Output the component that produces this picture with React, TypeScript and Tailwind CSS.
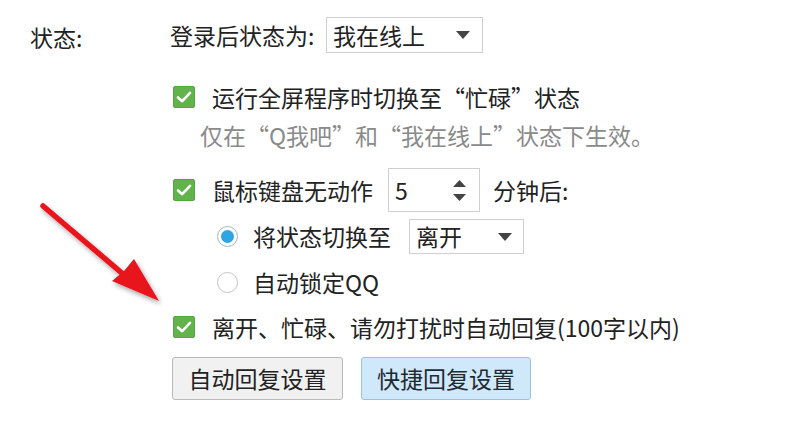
import React from "react";

// green ticked box
const Check = () => (
  <span className="inline-flex w-[22px] h-[22px] shrink-0 items-center justify-center rounded-[2px] bg-[#62b34c] border border-[#55a541]">
    <svg width="16" height="14" viewBox="0 0 16 14">
      <path d="M2 7.5 L6.2 11.2 L14 2.8" fill="none" stroke="#fff" strokeWidth="2.6" strokeLinecap="round" strokeLinejoin="round" />
    </svg>
  </span>
);

const Radio = ({ on }: { on?: boolean }) => (
  <span
    className={
      on
        ? "inline-flex w-[21px] h-[21px] shrink-0 items-center justify-center rounded-full border border-[#9fb6c8] bg-white"
        : "inline-flex w-[21px] h-[21px] shrink-0 rounded-full border border-[#c4c4c4] bg-white"
    }
  >
    {on && <span className="w-[13px] h-[13px] rounded-full bg-[#2ea6e3]" />}
  </span>
);

const Caret = () => (
  <svg width="14" height="8" viewBox="0 0 14 8">
    <path d="M0 0 H14 L7 8 Z" fill="#444" />
  </svg>
);

const App = () => {
  return (
    <div
      className="relative w-[800px] h-[423px] bg-white text-[23px] text-[#222] overflow-hidden"
      style={{ fontFamily: '"Noto Sans CJK SC", "Noto Sans", sans-serif' }}
    >
      <div className="flex">
        <div className="w-[170px] pl-[30px] pt-[19px]">
          <div className="h-[36px] flex items-center">状态:</div>
        </div>

        <div className="flex flex-col">
          {/* row 1 */}
          <div className="mt-[17px] h-[36px] flex items-center">
            <span className="w-[156px] whitespace-nowrap">登录后状态为:</span>
            <div className="w-[157px] h-[36px] border border-[#cfcfcf] flex items-center pl-[6px] pr-[12px] justify-between">
              <span>我在线上</span>
              <Caret />
            </div>
          </div>

          {/* row 2 */}
          <div className="mt-[33px] h-[22px] flex items-center ml-[3px]">
            <Check />
            <span className="ml-[17px] whitespace-nowrap">运行全屏程序时切换至“忙碌”状态</span>
          </div>

          {/* row 3 */}
          <div className="mt-[12px] h-[30px] flex items-center ml-[30px] text-[#8a8a8a] whitespace-nowrap">
            仅在“Q我吧”和“我在线上”状态下生效。
          </div>

          {/* row 4 */}
          <div className="mt-[18px] h-[44px] flex items-center ml-[3px]">
            <Check />
            <span className="ml-[17px] whitespace-nowrap">鼠标键盘无动作</span>
            <div className="ml-[15px] w-[92px] h-[44px] border border-[#cfcfcf] flex items-center justify-between pl-[6px] pr-[13px]">
              <span>5</span>
              <div className="flex flex-col gap-[7px]">
                <svg width="13" height="7" viewBox="0 0 13 7">
                  <path d="M0 7 H13 L6.5 0 Z" fill="#444" />
                </svg>
                <svg width="13" height="7" viewBox="0 0 13 7">
                  <path d="M0 0 H13 L6.5 7 Z" fill="#444" />
                </svg>
              </div>
            </div>
            <span className="ml-[13px] whitespace-nowrap">分钟后:</span>
          </div>

          {/* row 5 */}
          <div className="mt-[7px] h-[35px] flex items-center ml-[47px]">
            <Radio on />
            <span className="ml-[15px] whitespace-nowrap">将状态切换至</span>
            <div className="ml-[18px] w-[115px] h-[35px] border border-[#cfcfcf] flex items-center justify-between pl-[6px] pr-[11px]">
              <span>离开</span>
              <Caret />
            </div>
          </div>

          {/* row 6 */}
          <div className="mt-[13px] h-[30px] flex items-center ml-[47px]">
            <Radio />
            <span className="ml-[15px]">自动锁定QQ</span>
          </div>

          {/* row 7 */}
          <div className="mt-[19px] h-[22px] flex items-center ml-[3px]">
            <Check />
            <span className="ml-[17px] whitespace-nowrap">离开、忙碌、请勿打扰时自动回复(100字以内)</span>
          </div>

          {/* row 8 */}
          <div className="mt-[19px] flex items-center ml-[2px] gap-[18px]">
            <button className="w-[171px] h-[43px] rounded-[3px] border border-[#b9b9b9] bg-[#f1f1f1] text-[#222]">
              自动回复设置
            </button>
            <button className="w-[170px] h-[43px] rounded-[3px] border border-[#9cc2da] bg-[#cfe9fa] text-[#1f2a33]">
              快捷回复设置
            </button>
          </div>
        </div>
      </div>

      {/* red annotation arrow */}
      <svg className="absolute left-0 top-0 pointer-events-none" width="800" height="423" viewBox="0 0 800 423">
        <defs>
          <filter id="sh" x="-20%" y="-20%" width="140%" height="140%">
            <feGaussianBlur in="SourceAlpha" stdDeviation="2.5" />
            <feOffset dx="2" dy="3" result="b" />
            <feComponentTransfer>
              <feFuncA type="linear" slope="0.35" />
            </feComponentTransfer>
            <feMerge>
              <feMergeNode />
              <feMergeNode in="SourceGraphic" />
            </feMerge>
          </filter>
        </defs>
        <g filter="url(#sh)">
          <line x1="43" y1="206" x2="130" y2="280" stroke="#e8161b" strokeWidth="5.5" strokeLinecap="round" />
          <path d="M159 301 L112 281 L124 271 L134 259 Z" fill="#e8161b" />
        </g>
      </svg>
    </div>
  );
};

export default App;
